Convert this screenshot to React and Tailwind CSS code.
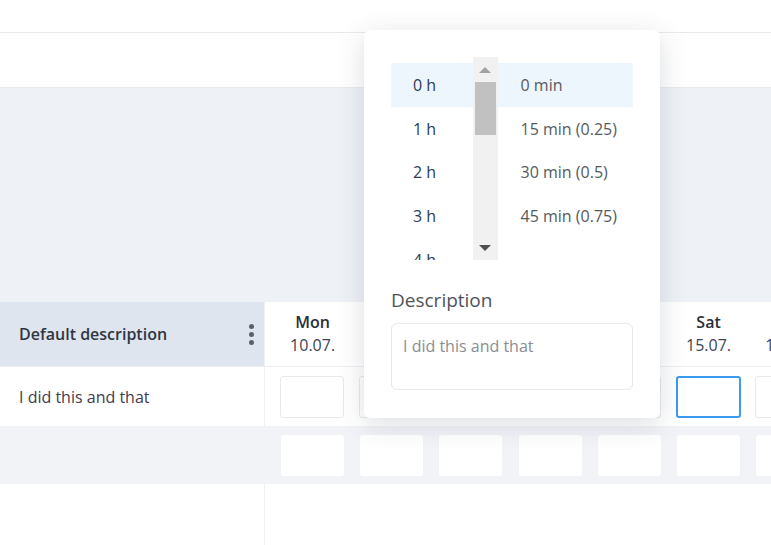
import React from "react";

const days = [
  ["Mon", "10.07."],
  ["Tue", "11.07."],
  ["Wed", "12.07."],
  ["Thu", "13.07."],
  ["Fri", "14.07."],
  ["Sat", "15.07."],
  ["Sun", "16.07."],
];

const hours = ["0 h", "1 h", "2 h", "3 h", "4 h", "5 h"];
const mins = ["0 min", "15 min (0.25)", "30 min (0.5)", "45 min (0.75)"];

export default function App() {
  return (
    <div
      className="relative w-[771px] h-[545px] overflow-hidden bg-white flex flex-col"
      style={{ fontFamily: '"Open Sans", "Noto Sans", sans-serif' }}
    >
      <div className="h-[33px] shrink-0 border-b border-[#e9eaed]" />
      <div className="h-[55px] shrink-0 border-b border-[#e9eaed]" />
      <div className="h-[214px] shrink-0 bg-[#eef2f7]" />

      {/* header row */}
      <div className="h-[65px] shrink-0 flex border-b border-[#eceef1]">
        <div className="w-[265px] shrink-0 bg-[#dfe5ee] border-r border-[#eef0f3] flex items-center justify-between pl-[19px] pr-[10px]">
          <span className="text-[16px] font-semibold text-[#2f3641]">Default description</span>
          <span className="flex flex-col gap-[3px] items-center">
            <span className="w-[5px] h-[5px] rounded-full bg-[#5b6068]" />
            <span className="w-[5px] h-[5px] rounded-full bg-[#5b6068]" />
            <span className="w-[5px] h-[5px] rounded-full bg-[#5b6068]" />
          </span>
        </div>
        <div className="flex pl-[8px]">
          {days.map(([d, dt]) => (
            <div key={d} className="w-[79.2px] shrink-0 flex flex-col items-center justify-center leading-[23px]">
              <span className="text-[16px] font-semibold text-[#2a2f38]">{d}</span>
              <span className="text-[16px] text-[#3a4658]">{dt}</span>
            </div>
          ))}
        </div>
      </div>

      {/* row 1 */}
      <div className="h-[59px] shrink-0 flex">
        <div className="w-[265px] shrink-0 border-r border-[#eef0f3] flex items-center pl-[19px]">
          <span className="text-[16px] text-[#433a4e]">I did this and that</span>
        </div>
        <div className="flex pl-[8px]">
          {days.map(([d], i) => (
            <div key={d} className="w-[79.2px] shrink-0 flex items-center pl-[7px]">
              {i === 5 ? (
                <div className="w-[65px] h-[42px] rounded-[3px] border-2 border-[#3a9bf0] bg-white" />
              ) : (
                <div className="w-[64px] h-[42px] rounded-[3px] border border-[#e7e9ed] bg-white" />
              )}
            </div>
          ))}
        </div>
      </div>

      {/* row 2 */}
      <div className="h-[58px] shrink-0 flex bg-[#f2f3f7]">
        <div className="w-[265px] shrink-0" />
        <div className="flex pl-[8px]">
          {days.map(([d]) => (
            <div key={d} className="w-[79.2px] shrink-0 flex items-center pl-[8px]">
              <div className="w-[63px] h-[41px] rounded-[3px] bg-white" />
            </div>
          ))}
        </div>
      </div>

      <div className="flex-1 flex">
        <div className="w-[265px] shrink-0 border-r border-[#eef0f3]" />
      </div>

      {/* popover */}
      <div className="absolute left-[364px] top-[30px] w-[296px] h-[388px] rounded-[6px] bg-white shadow-[0_6px_28px_rgba(40,50,70,0.16)] pt-[27px] px-[27px]">
        <div className="flex h-[203px]">
          {/* hours */}
          <div className="w-[82px] h-[203px] overflow-hidden pt-[6px]">
            {hours.map((h, i) => (
              <div
                key={h}
                className={`h-[43.75px] flex items-center pl-[22px] text-[16px] text-[#2c3b58] ${i === 0 ? "bg-[#edf5fd]" : ""}`}
              >
                {h}
              </div>
            ))}
          </div>
          {/* scrollbar */}
          <div className="w-[25px] h-[203px] bg-[#f1f1f1] flex flex-col items-center">
            <div className="h-[25px] flex items-center justify-center">
              <div className="w-0 h-0 border-l-[6px] border-r-[6px] border-b-[6px] border-l-transparent border-r-transparent border-b-[#a3a3a3]" />
            </div>
            <div className="w-[21px] h-[53px] bg-[#c1c1c1]" />
            <div className="flex-1" />
            <div className="h-[25px] flex items-center justify-center">
              <div className="w-0 h-0 border-l-[6px] border-r-[6px] border-t-[6px] border-l-transparent border-r-transparent border-t-[#505050]" />
            </div>
          </div>
          {/* minutes */}
          <div className="w-[136px] pt-[6px]">
            {mins.map((m, i) => (
              <div
                key={m}
                className={`h-[43.75px] flex items-center pl-[23px] text-[16px] text-[#555a60] ${i === 0 ? "bg-[#edf5fd]" : ""}`}
              >
                {m}
              </div>
            ))}
          </div>
        </div>
        <div className="mt-[28px] text-[19px] leading-[24px] text-[#4f5358]">Description</div>
        <div className="mt-[11px] w-[242px] h-[67px] rounded-[6px] border border-[#e6e8eb] px-[11px] pt-[10px] text-[16px] text-[#8a8d91]">
          I did this and that
        </div>
      </div>
    </div>
  );
}
